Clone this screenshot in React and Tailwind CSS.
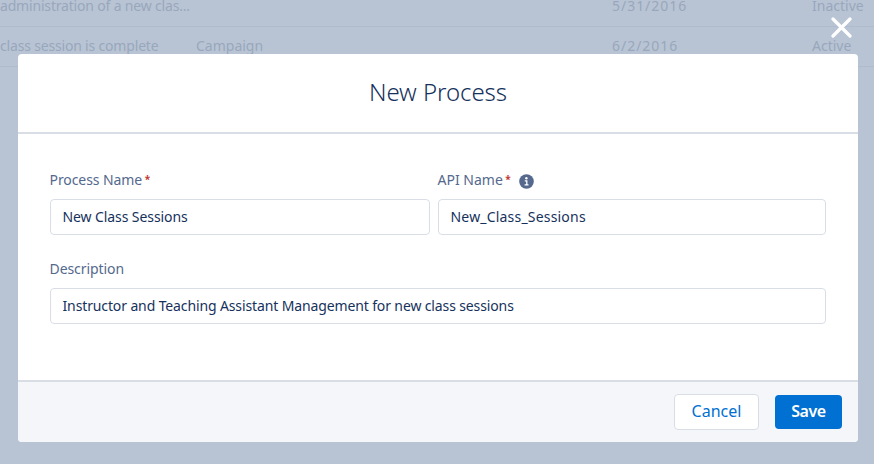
import React from "react";

function Row({ name, object, date, status }) {
  return (
    <div className="flex h-10 items-center whitespace-nowrap border-b border-[#aebccd] pb-[2px] text-sm text-[#98a7bd]">
      <div className="w-[196px] shrink-0 tracking-[-0.18px]">{name}</div>
      <div className="w-[416px] shrink-0">{object}</div>
      <div className="w-[200px] shrink-0 tracking-[0.97px]">{date}</div>
      <div>{status}</div>
    </div>
  );
}

function InfoIcon() {
  return (
    <svg className="ml-2 mt-[3px] size-[15px]" viewBox="0 0 15 15">
      <circle cx="7.5" cy="7.5" r="7.3" fill="#54698d" />
      <circle cx="7.4" cy="4.2" r="1.2" fill="#fff" />
      <path d="M5.8 6.8h2v3.6M5.6 10.8h3.9" stroke="#fff" strokeWidth="1.3" fill="none" />
    </svg>
  );
}

function Field({ label, required, info, value, className, labelClass, valueClass }) {
  return (
    <div className={className}>
      <div className="-ml-[0.5px] flex h-5 items-center text-sm text-[#54698d]">
        <span className={labelClass}>{label}</span>
        {required && <span className="-mt-[2px] ml-[2.5px] text-[10px] font-bold text-[#c23934]">*</span>}
        {info && <InfoIcon />}
      </div>
      <div className="mt-[9px] flex h-9 items-center whitespace-nowrap rounded border border-[#d8dde6] bg-white px-[11.5px] text-sm text-[#16325c]">
        <span className={valueClass}>{value}</span>
      </div>
    </div>
  );
}

export default function App() {
  return (
    <div className="relative h-[464px] w-[874px] overflow-hidden bg-[#b8c4d3] font-['Noto_Sans','Open_Sans',sans-serif]">
      <div className="-mt-[13px]">
        <Row name="administration of a new clas..." object="" date="5/31/2016" status="Inactive" />
        <Row name="class session is complete" object="Campaign" date="6/2/2016" status="Active" />
      </div>
      <button className="absolute left-[831px] top-[17px]" aria-label="Close">
        <svg className="size-[21px]" viewBox="0 0 21 21">
          <path d="M2 2l17 17M19 2L2 19" stroke="#fff" strokeWidth="3.2" strokeLinecap="round" />
        </svg>
      </button>
      <div className="absolute left-[18px] top-[54px] flex h-[388px] w-[840px] flex-col overflow-hidden rounded bg-white">
        <div className="flex h-20 items-center justify-center border-b-2 border-[#d8dde6] pb-[2px]">
          <h1 className="text-2xl font-light tracking-[-0.05px] text-[#16325c]">New Process</h1>
        </div>
        <div className="flex-1 px-8 pt-9">
          <div className="flex gap-2">
            <Field label="Process Name" required value="New Class Sessions" className="w-[380px]" labelClass="tracking-[-0.08px]" valueClass="tracking-[-0.09px]" />
            <Field label="API Name" required info value="New_Class_Sessions" className="w-[388px]" labelClass="" valueClass="tracking-[0.19px]" />
          </div>
          <Field label="Description" value="Instructor and Teaching Assistant Management for new class sessions" className="mt-6" labelClass="tracking-[-0.08px]" valueClass="tracking-[-0.125px]" />
        </div>
        <div className="flex h-[62px] items-center justify-end gap-4 border-t-2 border-[#d8dde6] bg-[#f4f6f9] px-4">
          <button className="h-9 w-[85px] rounded border border-[#d8dde6] bg-white pb-[2px] text-base text-[#0070d2]">Cancel</button>
          <button className="h-[34px] w-[67px] rounded bg-[#0070d2] pb-[2px] text-base font-semibold tracking-[-0.4px] text-white">Save</button>
        </div>
      </div>
    </div>
  );
}
